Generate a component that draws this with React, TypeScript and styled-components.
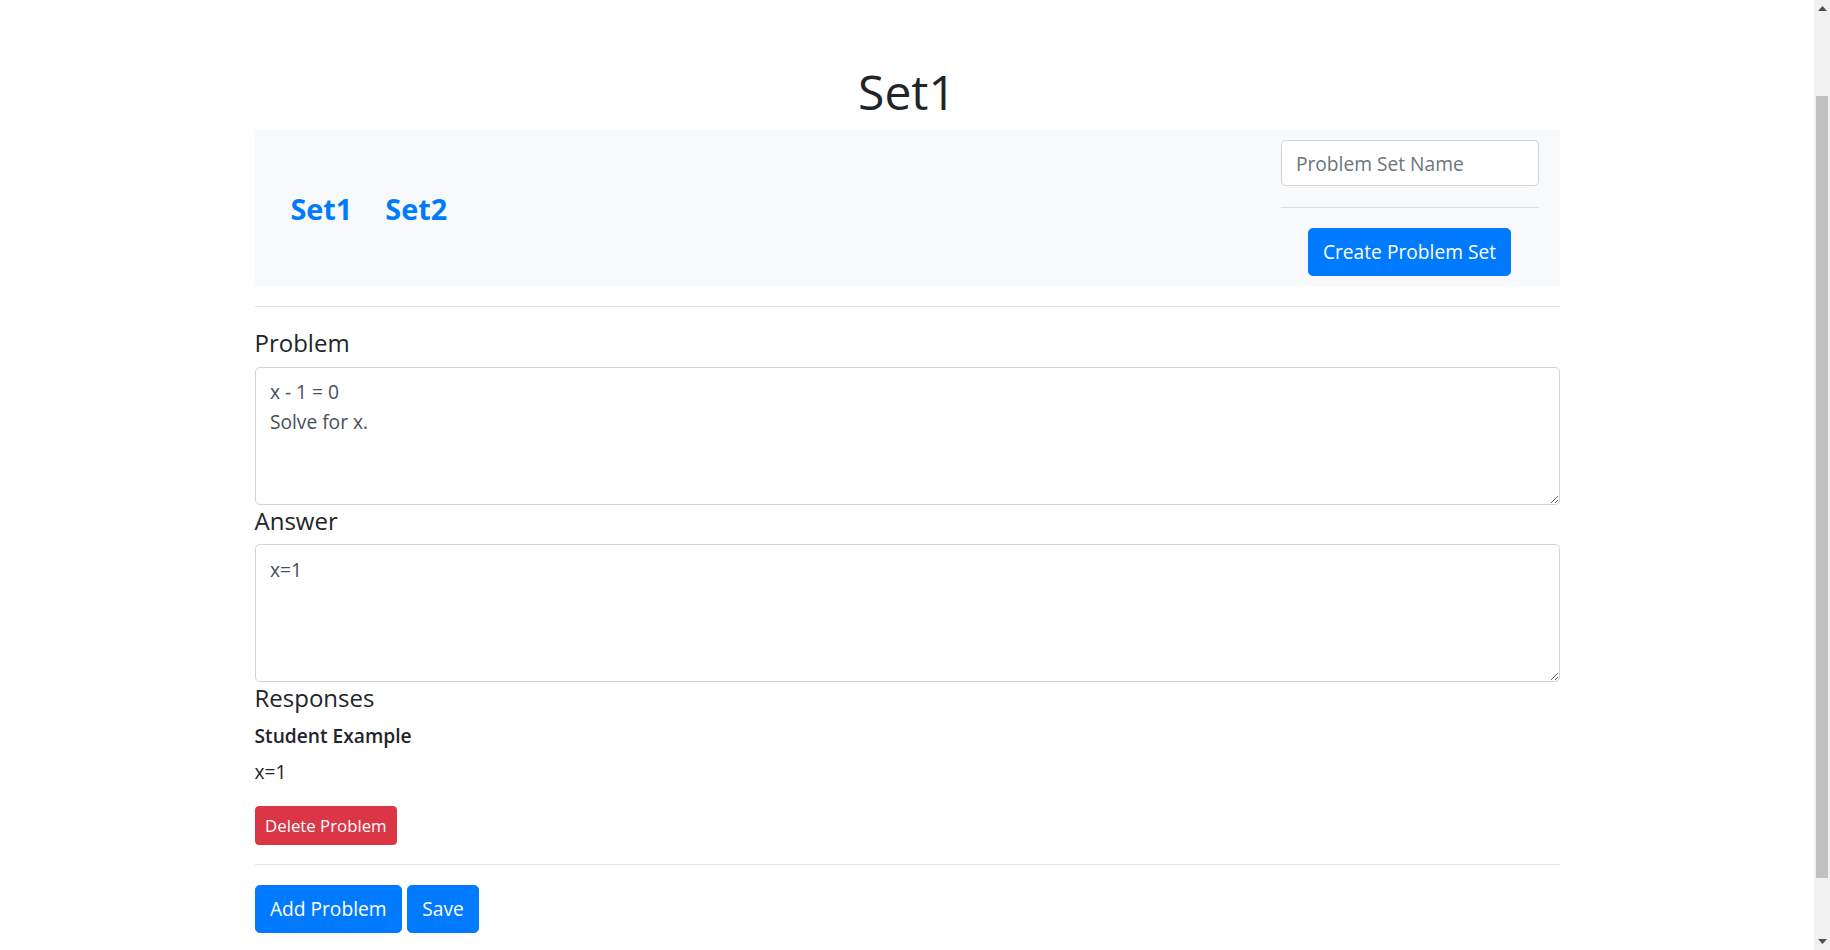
import React from "react";
import styled, { createGlobalStyle, css } from "styled-components";

const GlobalStyle = createGlobalStyle`
  html, body {
    margin: 0;
    padding: 0;
  }
  body {
    font-family: "Open Sans", "Noto Sans", Arial, sans-serif;
    font-size: 19.2px;
    line-height: 1.5;
    color: #212529;
    background: #ffffff;
  }
  * { box-sizing: border-box; }
`;

const Shell = styled.div`
  display: flex;
  align-items: flex-start;
  width: 100%;
`;

const Page = styled.div`
  flex: 1;
  min-width: 0;
  padding: 63px 0 80px;
`;

const Container = styled.main`
  width: 1305px;
  margin: 0 auto;
`;

const Title = styled.h1`
  margin: 0 0 9.6px;
  text-align: center;
  font-size: 48px;
  font-weight: 400;
  line-height: 1.2;
  color: #212529;
`;

const Panel = styled.nav`
  display: flex;
  align-items: center;
  justify-content: space-between;
  background: #f8f9fa;
  padding: 10px 21px 10px 36px;
`;

const SetLinks = styled.div`
  display: flex;
  gap: 33px;
  padding-top: 3px;
`;

const SetLink = styled.a`
  font-size: 28.8px;
  font-weight: 700;
  line-height: 1.2;
  color: #007bff;
  text-decoration: none;
  cursor: pointer;
`;

const CreateForm = styled.form`
  width: 258px;
  display: flex;
  flex-direction: column;
  align-items: center;
`;

const TextInput = styled.input`
  display: block;
  width: 100%;
  height: 46px;
  padding: 7.2px 14.4px;
  font-family: inherit;
  font-size: 19.2px;
  line-height: 1.5;
  color: #495057;
  background: #fff;
  border: 1px solid #ced4da;
  border-radius: 4.8px;
  &::placeholder {
    color: #6c757d;
  }
`;

const Divider = styled.hr`
  width: 100%;
  margin: 21px 0 20px;
  border: 0;
  border-top: 1px solid rgba(0, 0, 0, 0.1);
`;

const Button = styled.button<{ $variant?: "primary" | "danger"; $small?: boolean }>`
  display: inline-block;
  font-family: inherit;
  font-weight: 400;
  color: #fff;
  border: 1px solid transparent;
  cursor: pointer;
  background: ${(p) => (p.$variant === "danger" ? "#dc3545" : "#007bff")};
  border-color: ${(p) => (p.$variant === "danger" ? "#dc3545" : "#007bff")};
  ${(p) =>
    p.$small
      ? css`
          font-size: 16.8px;
          line-height: 1.5;
          padding: 5.9px 9.6px;
          border-radius: 3.84px;
        `
      : css`
          font-size: 19.2px;
          line-height: 1.5;
          padding: 8.5px 14.4px;
          border-radius: 4.8px;
        `}
`;

const Rule = styled.hr<{ $top: number; $bottom: number }>`
  margin: ${(p) => p.$top}px 0 ${(p) => p.$bottom}px;
  border: 0;
  border-top: 1px solid rgba(0, 0, 0, 0.1);
`;

const SectionHeading = styled.h5`
  margin: 0 0 8.5px;
  font-size: 24px;
  font-weight: 400;
  line-height: 1.2;
  color: #212529;
`;

const TextArea = styled.textarea`
  display: block;
  width: 100%;
  height: 138px;
  margin: 0 0 2px;
  padding: 9.6px 14.4px 7.2px;
  font-family: inherit;
  font-size: 19.2px;
  line-height: 30px;
  color: #495057;
  background: #fff;
  border: 1px solid #ced4da;
  border-radius: 4.8px;
  resize: vertical;
`;

const ResponseName = styled.h6`
  margin: 11px 0 11.5px;
  font-size: 19.2px;
  font-weight: 600;
  line-height: 1.2;
`;

const ResponseText = styled.p`
  margin: 0 0 19px;
`;

const ActionRow = styled.div`
  display: flex;
  gap: 5px;
`;

/* window scrollbar as seen in the screenshot */
const ScrollBar = styled.div`
  position: sticky;
  top: 0;
  flex: 0 0 16px;
  height: 100vh;
  display: flex;
  flex-direction: column;
  background: #f1f1f1;
`;

const ScrollArrow = styled.div`
  flex: 0 0 17px;
  display: flex;
  align-items: center;
  justify-content: center;
`;

const ScrollTrack = styled.div`
  flex: 1;
  display: flex;
  flex-direction: column;
  padding: 79px 2px 0;
`;

const ScrollThumb = styled.div`
  height: 782px;
  background: #c1c1c1;
`;

const Arrow = ({ down }: { down?: boolean }) => (
  <svg width="9" height="5" viewBox="0 0 9 5">
    <polygon
      points={down ? "0,0 9,0 4.5,5" : "0,5 9,5 4.5,0"}
      fill="#505050"
    />
  </svg>
);

export default function App() {
  return (
    <>
      <GlobalStyle />
      <Shell>
        <Page>
          <Container>
            <Title>Set1</Title>
            <Panel>
              <SetLinks>
                <SetLink>Set1</SetLink>
                <SetLink>Set2</SetLink>
              </SetLinks>
              <CreateForm onSubmit={(e) => e.preventDefault()}>
                <TextInput placeholder="Problem Set Name" />
                <Divider />
                <Button $variant="primary" type="submit">
                  Create Problem Set
                </Button>
              </CreateForm>
            </Panel>
            <Rule $top={20} $bottom={22.5} />
            <SectionHeading>Problem</SectionHeading>
            <TextArea defaultValue={"x - 1 = 0\nSolve for x."} />
            <SectionHeading>Answer</SectionHeading>
            <TextArea defaultValue={"x=1"} />
            <SectionHeading>Responses</SectionHeading>
            <ResponseName>Student Example</ResponseName>
            <ResponseText>x=1</ResponseText>
            <Button $variant="danger" $small>
              Delete Problem
            </Button>
            <Rule $top={19} $bottom={20} />
            <ActionRow>
              <Button $variant="primary">Add Problem</Button>
              <Button $variant="primary">Save</Button>
            </ActionRow>
          </Container>
        </Page>
        <ScrollBar>
          <ScrollArrow>
            <Arrow />
          </ScrollArrow>
          <ScrollTrack>
            <ScrollThumb />
          </ScrollTrack>
          <ScrollArrow>
            <Arrow down />
          </ScrollArrow>
        </ScrollBar>
      </Shell>
    </>
  );
}
